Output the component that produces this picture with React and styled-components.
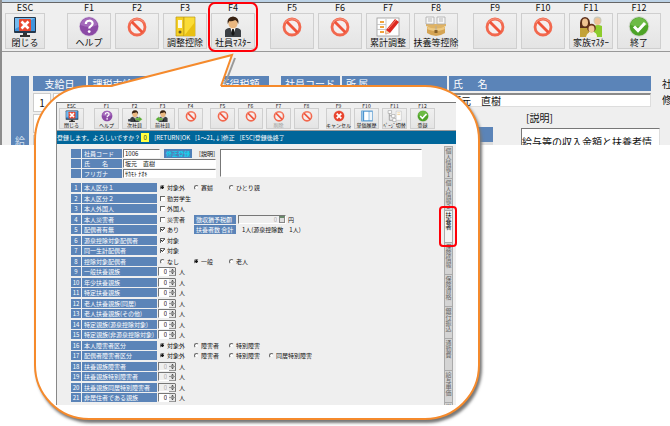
import React from 'react';
import styled, { createGlobalStyle, css } from 'styled-components';

const colors = {
  face: '#efefef',
  blue: '#5b84b8',
  message: '#00669a',
  orange: '#f58a2c',
  red: '#ff0008',
  line: '#777',
};

const GlobalStyle = createGlobalStyle`
  * { box-sizing: border-box; }
  body {
    margin: 0;
    background: #fff;
    color: #111;
    font-family: "Noto Sans CJK JP", "Liberation Sans", sans-serif;
  }
  button, input, textarea { font-family: inherit; color: inherit; }
`;

const Page = styled.main`
  position: relative;
  min-height: 426px;
  overflow: hidden;
`;

/* ---------- payroll window behind the callout ---------- */

const BackWindow = styled.section`
  background: ${colors.face};
  border-left: 2px solid #8c8c8c;
  overflow: hidden;
`;

const TitleEdge = styled.div`
  height: 3px;
  background: #bcd2e6;
  border-bottom: 1px solid #666;
`;

const Toolbar = styled.div`
  display: flex;
  gap: ${props => (props.$small ? '7px' : '15px')};
  padding: ${props => (props.$small ? '0 0 1px 2px' : '0 0 2px 3px')};
  border-bottom: 1px solid #999;
`;

const KeyGroup = styled.div`
  display: flex;
  gap: ${props => (props.$small ? '3px' : '4px')};
  margin-right: ${props => (props.$first ? (props.$small ? '3px' : '7px') : 0)};
`;

const KeyCell = styled.div`
  position: relative;
  flex: none;
  width: ${props => (props.$small ? '25px' : props.$narrow ? '40px' : '44px')};
  text-align: center;
  font-size: ${props => (props.$small ? '5px' : '9px')};
  line-height: ${props => (props.$small ? '5px' : '10px')};

  ${props => props.$marked && css`
    &::after {
      content: '';
      position: absolute;
      inset: -1px -3px -3px;
      border: 2px solid ${colors.red};
      border-radius: 7px;
    }
  `}
`;

const KeyButton = styled.button`
  display: flex;
  flex-direction: column;
  align-items: center;
  width: 100%;
  height: ${props => (props.$small ? '21px' : '36px')};
  padding: ${props => (props.$small ? '1px 0 0' : '2px 0 0')};
  border: 1px solid #cfcfcf;
  background: linear-gradient(#f0f0f0, #e4e4e4);
  font-size: ${props => (props.$small ? '5px' : '9px')};
  line-height: ${props => (props.$small ? '6px' : '11px')};
  white-space: nowrap;

  svg {
    flex: none;
    display: block;
    width: ${props => (props.$small ? '16px' : '26px')};
    height: ${props => (props.$small ? '12px' : '21px')};
  }
  &:disabled { color: #999; }
`;

const BackForm = styled.div`
  display: flex;
  height: 93px;
  padding: 24px 0 0 9px;
  overflow: hidden;
`;

const SideHeading = styled.div`
  flex: none;
  display: flex;
  align-items: flex-end;
  justify-content: center;
  width: 18px;
  margin-right: 2px;
  background: ${colors.blue};
  color: #d5e0ee;
  font-size: 10px;
  line-height: 8px;
`;

const PayTable = styled.table`
  flex: none;
  width: 240px;
  height: 82px;
  margin-top: -2px;
  border-spacing: 2px;
  table-layout: fixed;
  font-size: 10px;
  line-height: 12px;

  th {
    height: 15px;
    padding: 0;
    background: ${colors.blue};
    color: #fff;
    font-weight: normal;
  }
  td {
    height: 14px;
    padding: 0;
    border: 1px solid #ccc;
    background: #fff;
    text-align: center;
  }
`;

const EmployeeArea = styled.div`
  flex: 1;
  min-width: 0;
  margin: 0 11px 0 10px;
`;

const EmployeeGrid = styled.div`
  display: grid;
  grid-template-columns: 59px 105px 1fr;
  column-gap: 2px;
  font-size: 10px;
`;

const ColumnHeading = styled.label`
  height: 15px;
  padding: 0 4px;
  background: ${colors.blue};
  color: #fff;
  line-height: 15px;
  white-space: pre;
`;

const BackInput = styled.input`
  width: 100%;
  min-width: 0;
  height: 14px;
  margin-top: 2px;
  padding: 0 1px;
  border: 1px solid #ddd;
  border-top: 2px solid #8a8a8a;
  background: #fff;
  font-size: 10px;
`;

const NoteArea = styled.div`
  display: grid;
  grid-template-columns: 212px 1fr;
  column-gap: 28px;
  margin-right: -9px;
  font-size: 10px;
`;

const NoteStripe = styled.div`
  height: 18px;
  margin-top: 20px;
  background: ${colors.blue};
  border-bottom: 3px solid #ddd;
`;

const NoteLabel = styled.label`
  display: block;
  padding: 3px 0 0 5px;
  line-height: 15px;
`;

const BackNote = styled.textarea`
  display: block;
  width: 100%;
  height: 40px;
  margin-top: 3px;
  padding: 7px 0 0;
  border: 1px solid #ddd;
  border-top: 1px solid ${colors.line};
  border-left: 1px solid ${colors.line};
  background: #fff;
  font-size: 10px;
  line-height: 12px;
  resize: none;
  overflow: hidden;
`;

const EdgeLabels = styled.div`
  flex: none;
  width: 8px;
  overflow: hidden;
  font-size: 10px;
  line-height: 16px;
  white-space: nowrap;
`;

/* ---------- callout ---------- */

const Callout = styled.section`
  position: absolute;
  top: 85px;
  left: 34px;
  right: 190px;
  padding: 15px 22px 13px 20px;
  border: 2px solid ${colors.orange};
  border-radius: 55px;
  background: #fff;
  box-shadow: 2px 3px 3px #777;
`;

const Pointer = styled.svg`
  position: absolute;
  top: -34px;
  left: 74px;
`;

const MasterWindow = styled.div`
  border-top: 1px solid #777;
  border-left: 1px solid #888;
  background: ${colors.face};
`;

const MessageBar = styled.div`
  display: flex;
  align-items: center;
  gap: 5px;
  height: 13px;
  background: ${colors.message};
  color: #fff;
  font-size: 6px;
  line-height: 9px;
  white-space: pre;
`;

const AnswerInput = styled.input`
  width: 8px;
  height: 9px;
  margin: 0 0 0 -4px;
  padding: 0;
  border: 0;
  background: #ffff40;
  color: #222;
  font-size: 6px;
  text-align: center;
`;

const MasterBody = styled.div`
  display: flex;
`;

const MasterForm = styled.form`
  flex: 1;
  min-width: 0;
  padding: 5px 22px 1px 14px;
  font-size: 6px;
  line-height: 9px;
`;

const ProfileArea = styled.div`
  display: flex;
  margin-bottom: 4px;
`;

const ProfileRows = styled.div`
  flex: none;
  width: 145px;
`;

const ProfileRow = styled.div`
  display: flex;
  gap: 1px;
  height: 9px;
  margin-bottom: 1px;
`;

const BlueCell = styled.label`
  flex: none;
  width: ${props => props.$width};
  height: 9px;
  padding: 0 ${props => (props.$center ? '0' : '2px')};
  background: ${colors.blue};
  color: #fff;
  text-align: ${props => (props.$center ? 'center' : 'left')};
  white-space: pre;
  overflow: hidden;
`;

const SmallInput = styled.input`
  width: ${props => props.$width};
  height: 9px;
  padding: ${props => (props.$right ? '0 8px 0 0' : '0 1px')};
  border: 1px solid #fff;
  border-top-color: ${colors.line};
  border-left-color: ${colors.line};
  background: #fff;
  font-size: 6px;
  line-height: 7px;
  text-align: ${props => (props.$right ? 'right' : 'left')};
  &:disabled { background: ${colors.face}; color: #aaa; }
`;

const ModeBadge = styled.span`
  height: 9px;
  margin-left: 3px;
  padding: 0 2px;
  background: #4f7fb8;
  color: #00e8ff;
`;

const SmallNoteLabel = styled.label`
  margin-left: 6px;
`;

const SmallNote = styled.textarea`
  flex: 1;
  min-width: 0;
  height: 28px;
  margin-left: 4px;
  border: 1px solid #fff;
  border-top-color: ${colors.line};
  border-left-color: ${colors.line};
  background: #fff;
  resize: none;
`;

const FieldRow = styled.div`
  display: flex;
  gap: 1px;
  height: 9px;
  margin-bottom: 1px;
  &:nth-child(odd) { margin-bottom: 2px; }
`;

const Controls = styled.div`
  flex: 1;
  display: grid;
  grid-template-columns: 34px 35px 40px 1fr;
  padding-left: 2px;
`;

const Option = styled.label`
  display: flex;
  align-items: center;
  gap: 2px;
  height: 9px;
  white-space: nowrap;
`;

const Radio = styled.input.attrs({ type: 'radio' })`
  appearance: none;
  flex: none;
  width: 5px;
  height: 5px;
  margin: 0;
  border: 1px solid #eee;
  border-top-color: #666;
  border-left-color: #666;
  border-radius: 50%;
  background: #fff;
  &:checked { background: radial-gradient(circle, #111 1px, #fff 2px); }
`;

const TickMark = styled.span`
  position: relative;
  display: flex;
  flex: none;
  svg {
    position: absolute;
    inset: 0;
    display: none;
    pointer-events: none;
  }
  input:checked + svg { display: block; }
`;

const CheckInput = styled.input.attrs({ type: 'checkbox' })`
  appearance: none;
  width: 5px;
  height: 5px;
  margin: 0;
  border-top: 1px solid #666;
  border-left: 1px solid #666;
  background: #fff;
`;

const CounterBox = styled.div`
  display: flex;
  align-items: center;
  height: 9px;
  margin-left: -2px;
`;

const SpinButtons = styled.span`
  flex: none;
  display: flex;
  flex-direction: column;
  margin-left: -7px;
  margin-right: 3px;
`;

const SpinButton = styled.button`
  display: block;
  width: 7px;
  height: 4px;
  padding: 0;
  border: 0;
  border-right: 1px solid #777;
  border-bottom: 1px solid #999;
  background: #e6e6e6;
  svg { display: block; margin: 0 auto; }
`;

const Extra = styled.div`
  grid-column: 2 / -1;
  display: flex;
  gap: 2px;
  white-space: pre;
`;

const AmountBox = styled.span`
  display: flex;
  align-items: center;
  margin-right: 1px;
`;

const CalcButton = styled.button`
  width: 6px;
  height: 7px;
  margin-left: -7px;
  padding: 0;
  border: 1px solid #888;
  border-top: 2px solid #6b8a6b;
  background: #ddd;
`;

const TotalText = styled.span`
  margin-left: 4px;
`;

const TabStrip = styled.nav`
  flex: none;
  display: flex;
  flex-direction: column;
  width: 12px;
  height: 261px;
  padding-top: 2px;
  padding-right: 3px;
  overflow-x: visible;
  overflow-y: clip;
`;

const Tab = styled.button`
  position: relative;
  flex: none;
  display: flex;
  align-items: center;
  justify-content: flex-start;
  width: 9px;
  height: 32px;
  padding: 1px 0 0;
  border: 1px solid #aaa;
  border-bottom: 0;
  background: ${props => (props.$active ? '#f4f4f4' : '#d4d4d4')};
  color: ${props => (props.$active ? '#000' : '#666')};
  font-size: 6px;
  line-height: 7px;
  writing-mode: vertical-rl;
  text-orientation: upright;
  white-space: nowrap;

  ${props => props.$active && css`
    z-index: 1;
    &::after {
      content: '';
      position: absolute;
      inset: -5px -5px -5px -6px;
      border: 2px solid ${colors.red};
      border-radius: 4px;
    }
  `}
`;

/* ---------- icons, all drawn on a 26 x 21 grid ---------- */

const icons = {
  close: (
    <>
      <rect x="2" y="1" width="22" height="16" rx="1" fill="#26384c" />
      <rect x="3" y="2" width="20" height="13" fill="#3f94dc" />
      <path d="M3 2h20L3 13z" fill="#74baf0" />
      <path d="M11 17h4v2h3v2H8v-2h3z" fill="#333" />
      <rect x="7" y="3" width="12" height="12" rx="1" fill="#e9482f" />
      <path d="M9.5 5.5l7 7m0-7l-7 7" stroke="#fff" strokeWidth="2.6" />
    </>
  ),
  help: (
    <>
      <circle cx="13" cy="10.5" r="10" fill="#d9cbe0" />
      <circle cx="13" cy="10.5" r="9.3" fill="#8c4aa6" />
      <path d="M4.5 9a8.6 8.6 0 0 1 17 0q-8 4-17 0z" fill="#a46abb" />
      <path d="M9.8 8c0-4.3 6.8-4.3 6.8-.4 0 2.6-3.4 2.5-3.4 5" fill="none" stroke="#fff" strokeWidth="2.2" />
      <circle cx="13.2" cy="15.6" r="1.4" fill="#fff" />
    </>
  ),
  ban: (
    <>
      <circle cx="13" cy="11" r="8" fill="#f5eeee" stroke="#f2684e" strokeWidth="2.8" />
      <path d="M7.5 5.5l11 11" stroke="#ef543b" strokeWidth="2.8" />
      <path d="M5.8 7A8.5 8.5 0 0 1 20 6.5" fill="none" stroke="#f79a84" strokeWidth="1" />
    </>
  ),
  binder: (
    <>
      <path d="M4 1h8v19H4z" fill="#f6cf20" stroke="#b99817" strokeWidth=".7" />
      <path d="M12 1h11v19H12z" fill="#fbdc36" stroke="#b99817" strokeWidth=".7" />
      <rect x="6" y="4" width="4" height="8" fill="#fffbe0" />
      <circle cx="8" cy="16" r="1.5" fill="#6b5a1d" />
      <path d="M12 20L23 6v14z" fill="#e9c012" />
    </>
  ),
  person: (
    <>
      <path d="M5 21v-6q0-2 4-3h8q4 1 4 3v6z" fill="#3b3f44" />
      <path d="M10 11h6l-3 8z" fill="#fff" />
      <path d="M12.2 13h1.6l.8 5-1.6 2-1.6-2z" fill="#171717" />
      <ellipse cx="13" cy="7" rx="4.7" ry="5.5" fill="#eab780" />
      <path d="M7.7 8Q6.5 1 13 .5 19.5 1 18.3 8q-1-3-3-4-4 2-6 1z" fill="#392313" />
    </>
  ),
  pencil: (
    <>
      <rect x="2" y="2" width="22" height="18" fill="#fff" stroke="#999" strokeWidth=".8" />
      <path d="M5 6h4m-4 5h4m-4 5h4" stroke="#f0a53d" strokeWidth="2" />
      <path d="M11 3v16M2 8.5h9m-9 5h9" stroke="#bbb" strokeWidth=".8" />
      <path d="M11 14L20 3l4 3-9 11-5 1z" fill="#dc2820" />
      <path d="M11 14l4 3-5 1z" fill="#eed7b0" />
      <path d="M13 13l8-9" stroke="#f58672" />
    </>
  ),
  trays: (
    <>
      <path d="M4 11v6q9 6 18 0v-6z" fill="#d5a453" />
      <ellipse cx="13" cy="12" rx="9" ry="3" fill="#edc983" />
      <path d="M3 8h20v2q-10 5-20 0z" fill="#dfb365" />
      <path d="M3 1h8v7H3zM14 1h8v7h-8z" fill="#f6f6f6" stroke="#aaa" strokeWidth=".8" />
      <path d="M5 3h4m-4 2h4m7-2h4m-4 2h4M13 10v7" stroke="#aaa" strokeWidth=".8" />
      <rect x="11.5" y="14" width="3" height="3" fill="#866029" />
    </>
  ),
  family: (
    <>
      <path d="M2 21v-9q5-3 9 0v9z" fill="#c3a238" />
      <path d="M16 21V10q4-2 8 0v11z" fill="#8dcc2c" />
      <path d="M2 12Q1 1 7 1t5 11z" fill="#5b2d19" />
      <ellipse cx="7" cy="6.5" rx="3" ry="4" fill="#f0c291" />
      <circle cx="19.5" cy="4.5" r="4" fill="#c9c9bb" />
      <ellipse cx="19.5" cy="5.5" rx="3" ry="3.6" fill="#efc397" />
      <path d="M8 21q1-5 6-5t5 5z" fill="#f4f0e5" />
      <circle cx="13.5" cy="12" r="4.3" fill="#6b341c" />
      <ellipse cx="13.5" cy="13" rx="3" ry="3.4" fill="#f3c99a" />
    </>
  ),
  check: (
    <>
      <circle cx="13" cy="10.5" r="10.3" fill="#cfd6cb" />
      <circle cx="13" cy="10.5" r="9.3" fill="#4da327" />
      <path d="M4.5 9a8.6 8.6 0 0 1 17 0q-8 3-17 0z" fill="#6dbb45" />
      <path d="M8 10.5l4 4 7-7.5" fill="none" stroke="#fff" strokeWidth="3" />
    </>
  ),
  cancel: (
    <>
      <circle cx="13" cy="10.5" r="10" fill="#ecc9c2" />
      <circle cx="13" cy="10.5" r="9.2" fill="#e8452f" />
      <path d="M9 6.5l8 8m0-8l-8 8" stroke="#fff" strokeWidth="3.2" />
    </>
  ),
  ledger: (
    <>
      <rect x="3" y="1" width="20" height="19" fill="#4c94cf" />
      <rect x="8" y="3" width="8" height="15" fill="#fff" />
      <rect x="17" y="3" width="5" height="15" fill="#edf5fb" />
      <path d="M5 2v17" stroke="#b6d9f2" strokeWidth="1.4" />
    </>
  ),
  pages: (
    <>
      <path d="M3 3v15h8m-8-8h6" fill="none" stroke="#999" strokeWidth="1.5" />
      <path d="M1 1h6v5H1zM7 8h6v5H7zM9 15h6v5H9z" fill="#fff" stroke="#999" />
      <path d="M15 2h9v16h-9z" fill="#fff" stroke="#bbb" />
      <path d="M17 5h5m-5 3h5" stroke="#e5b765" />
    </>
  ),
};

icons.next = (
  <>
    {icons.person}
    <path d="M1 16h5v4H1z" fill="#3b3f44" />
    <path d="M14 14h6v-3l6 5-6 5v-3h-6z" fill="#5cad35" stroke="#fff" strokeWidth=".5" />
  </>
);
icons.prev = (
  <>
    {icons.person}
    <path d="M12 14H6v-3l-6 5 6 5v-3h6z" fill="#5cad35" stroke="#fff" strokeWidth=".5" />
  </>
);

const backKeys = [
  [{ key: 'ESC', icon: 'close', text: '閉じる', narrow: true }],
  [
    { key: 'F1', icon: 'help', text: 'ヘルプ' },
    { key: 'F2', icon: 'ban' },
    { key: 'F3', icon: 'binder', text: '調整控除' },
    { key: 'F4', icon: 'person', text: '社員ﾏｽﾀｰ', marked: true },
  ],
  [
    { key: 'F5', icon: 'ban' },
    { key: 'F6', icon: 'ban' },
    { key: 'F7', icon: 'pencil', text: '累計調整' },
    { key: 'F8', icon: 'trays', text: '扶養等控除' },
  ],
  [
    { key: 'F9', icon: 'ban' },
    { key: 'F10', icon: 'ban' },
    { key: 'F11', icon: 'family', text: '家族ﾏｽﾀｰ' },
    { key: 'F12', icon: 'check', text: '終了' },
  ],
];

const masterKeys = [
  [{ key: 'ESC', icon: 'close', text: '閉じる' }],
  [
    { key: 'F1', icon: 'help', text: 'ヘルプ' },
    { key: 'F2', icon: 'next', text: '次社員' },
    { key: 'F3', icon: 'prev', text: '前社員' },
    { key: 'F4', icon: 'ban' },
  ],
  [
    { key: 'F5', icon: 'ban' },
    { key: 'F6', icon: 'ban' },
    { key: 'F7', icon: 'ban', text: '削除', disabled: true },
    { key: 'F8', icon: 'ban' },
  ],
  [
    { key: 'F9', icon: 'cancel', text: 'キャンセル' },
    { key: 'F10', icon: 'ledger', text: '単価履歴' },
    { key: 'F11', icon: 'pages', text: 'ﾍﾟｰｼﾞ切替' },
    { key: 'F12', icon: 'check', text: '登録' },
  ],
];

const fields = [
  { label: '本人区分１', radios: ['対象外', '寡婦', 'ひとり親'], value: 0 },
  { label: '本人区分２', check: '勤労学生' },
  { label: '本人外国人', check: '外国人' },
  { label: '本人災害者', check: '災害者', extra: 'amount' },
  { label: '配偶者有無', check: 'あり', checked: true, extra: 'total' },
  { label: '源泉控除対象配偶者', check: '対象', checked: true },
  { label: '同一生計配偶者', check: '対象', checked: true },
  { label: '控除対象配偶者', radios: ['なし', '一般', '老人'], value: 1 },
  { label: '一般扶養親族' },
  { label: '年少扶養親族' },
  { label: '特定扶養親族' },
  { label: '老人扶養親族(同居)' },
  { label: '老人扶養親族(その他)' },
  { label: '特定親族(源泉控除対象)' },
  { label: '特定親族(非源泉控除対象)' },
  { label: '本人障害者区分', radios: ['対象外', '障害者', '特別障害'], value: 0 },
  { label: '配偶者障害者区分', radios: ['対象外', '障害者', '特別障害', '同居特別障害'], value: 0 },
  { label: '扶養親族障害者', disabled: true },
  { label: '扶養親族特別障害者', disabled: true },
  { label: '扶養親族同居特別障害者', disabled: true },
  { label: '非居住者である親族' },
];

const tabs = ['個人情報1', '個人情報2', '扶養者', '保険情報', '保険資格', '銀行振込', '通勤費', '給与単価', '単価'];

const FunctionKeys = ({ groups, small }) => (
  <Toolbar $small={small}>
    {groups.map((group, index) => (
      <KeyGroup key={index} $small={small} $first={index === 0}>
        {group.map(item => (
          <KeyCell key={item.key} $small={small} $narrow={item.narrow} $marked={item.marked}>
            {item.key}
            <KeyButton type="button" $small={small} disabled={item.disabled} aria-label={item.text || item.key}>
              <svg viewBox="0 0 26 21" aria-hidden="true">{icons[item.icon]}</svg>
              {item.text}
            </KeyButton>
          </KeyCell>
        ))}
      </KeyGroup>
    ))}
  </Toolbar>
);

const Counter = ({ id, disabled }) => (
  <CounterBox>
    <SmallInput id={id} $width="18px" $right defaultValue="0" disabled={disabled} />
    <SpinButtons>
      <SpinButton type="button" aria-label="増やす">
        <svg width="3" height="3" viewBox="0 0 3 3"><path d="M0 2.5L1.5 1 3 2.5z" fill="#222" /></svg>
      </SpinButton>
      <SpinButton type="button" aria-label="減らす">
        <svg width="3" height="3" viewBox="0 0 3 3"><path d="M0 .5L1.5 2 3 .5z" fill="#222" /></svg>
      </SpinButton>
    </SpinButtons>
    人
  </CounterBox>
);

const FieldControls = ({ field, id }) => {
  if (field.radios) {
    return field.radios.map((text, index) => (
      <Option key={text}>
        <Radio id={index === 0 ? id : undefined} name={id} defaultChecked={index === field.value} />
        {text}
      </Option>
    ));
  }
  if (field.check) {
    return (
      <Option>
        <TickMark>
          <CheckInput id={id} defaultChecked={field.checked} />
          <svg width="5" height="5" viewBox="0 0 5 5">
            <path d="M1 2l1.3 1.6L4.6 1" fill="none" stroke="#111" />
          </svg>
        </TickMark>
        {field.check}
      </Option>
    );
  }
  return <Counter id={id} disabled={field.disabled} />;
};

const FieldExtra = ({ kind }) => {
  if (kind === 'amount') {
    return (
      <Extra>
        <BlueCell htmlFor="deferred" $width="42px">徴収猶予税額</BlueCell>
        <AmountBox>
          <SmallInput id="deferred" $width="48px" $right defaultValue="0" disabled />
          <CalcButton type="button" aria-label="電卓" />
        </AmountBox>
        円
      </Extra>
    );
  }
  return (
    <Extra>
      <BlueCell as="span" $width="42px">扶養者数 合計</BlueCell>
      <TotalText>1人(源泉控除数　1人)</TotalText>
    </Extra>
  );
};

const PayrollWindow = () => (
  <BackWindow>
    <TitleEdge />
    <FunctionKeys groups={backKeys} />
    <BackForm>
      <SideHeading>給</SideHeading>
      <PayTable>
        <colgroup>
          <col style={{ width: 18 }} />
          <col style={{ width: 33 }} />
          <col />
          <col />
          <col />
        </colgroup>
        <thead>
          <tr>
            <th colSpan="2">支給日</th>
            <th>課税支給額</th>
            <th />
            <th>所得税額</th>
          </tr>
        </thead>
        <tbody>
          <tr><td>1</td><td /><td /><td /><td /></tr>
          <tr><td /><td /><td /><td /><td /></tr>
          <tr><td /><td /><td /><td /><td /></tr>
        </tbody>
      </PayTable>
      <EmployeeArea>
        <EmployeeGrid>
          <ColumnHeading htmlFor="back-code">社員コード</ColumnHeading>
          <ColumnHeading htmlFor="back-section">所 属</ColumnHeading>
          <ColumnHeading htmlFor="back-name">氏　  名</ColumnHeading>
          <BackInput id="back-code" />
          <BackInput id="back-section" />
          <BackInput id="back-name" defaultValue="坂元　直樹" />
        </EmployeeGrid>
        <NoteArea>
          <NoteStripe />
          <div>
            <NoteLabel htmlFor="back-note">[説明]</NoteLabel>
            <BackNote id="back-note" defaultValue="給与等の収入金額と扶養者情" />
          </div>
        </NoteArea>
      </EmployeeArea>
      <EdgeLabels>
        <div>社</div>
        <div>修</div>
      </EdgeLabels>
    </BackForm>
  </BackWindow>
);

const EmployeeMaster = () => (
  <MasterWindow>
    <FunctionKeys groups={masterKeys} small />
    <MessageBar>
      <label htmlFor="answer">登録します。よろしいですか？</label>
      <AnswerInput id="answer" defaultValue="0" />
      <span>[RETURN]OK</span>
      <span>[1～21,↓]修正</span>
      <span>[ESC]登録後終了</span>
    </MessageBar>
    <MasterBody>
      <MasterForm>
        <ProfileArea>
          <ProfileRows>
            <ProfileRow>
              <BlueCell as="span" $width="10px" />
              <BlueCell htmlFor="code" $width="40px">社員コード</BlueCell>
              <SmallInput id="code" $width="37px" defaultValue="1006" />
              <ModeBadge>修正登録</ModeBadge>
              <SmallNoteLabel htmlFor="note">[説明]</SmallNoteLabel>
            </ProfileRow>
            <ProfileRow>
              <BlueCell as="span" $width="10px" />
              <BlueCell htmlFor="name" $width="40px">氏　　名</BlueCell>
              <SmallInput id="name" $width="93px" defaultValue="坂元　直樹" />
            </ProfileRow>
            <ProfileRow>
              <BlueCell as="span" $width="10px" />
              <BlueCell htmlFor="kana" $width="40px">フリガナ</BlueCell>
              <SmallInput id="kana" $width="93px" defaultValue="ｻｶﾓﾄ ﾅｵｷ" />
            </ProfileRow>
          </ProfileRows>
          <SmallNote id="note" />
        </ProfileArea>
        <div>
          {fields.map((field, index) => {
            const id = `field-${index + 1}`;
            return (
              <FieldRow key={id}>
                <BlueCell as="span" $width="10px" $center>{index + 1}</BlueCell>
                <BlueCell htmlFor={id} $width="75px">{field.label}</BlueCell>
                <Controls>
                  <FieldControls field={field} id={id} />
                  {field.extra && <FieldExtra kind={field.extra} />}
                </Controls>
              </FieldRow>
            );
          })}
        </div>
      </MasterForm>
      <TabStrip>
        {tabs.map(text => (
          <Tab key={text} type="button" $active={text === '扶養者'}>{text}</Tab>
        ))}
      </TabStrip>
    </MasterBody>
  </MasterWindow>
);

const App = () => (
  <Page>
    <GlobalStyle />
    <PayrollWindow />
    <Callout>
      <Pointer width="130" height="36" viewBox="0 0 130 36" aria-hidden="true">
        <path d="M125 5L115 31" stroke="#999" strokeWidth="2" />
        <path d="M1 33L122 2l-11 31v2H6z" fill="#fff" />
        <path d="M1 33L122 2l-11 31" fill="none" stroke={colors.orange} strokeWidth="2" />
      </Pointer>
      <EmployeeMaster />
    </Callout>
  </Page>
);

export default App;
